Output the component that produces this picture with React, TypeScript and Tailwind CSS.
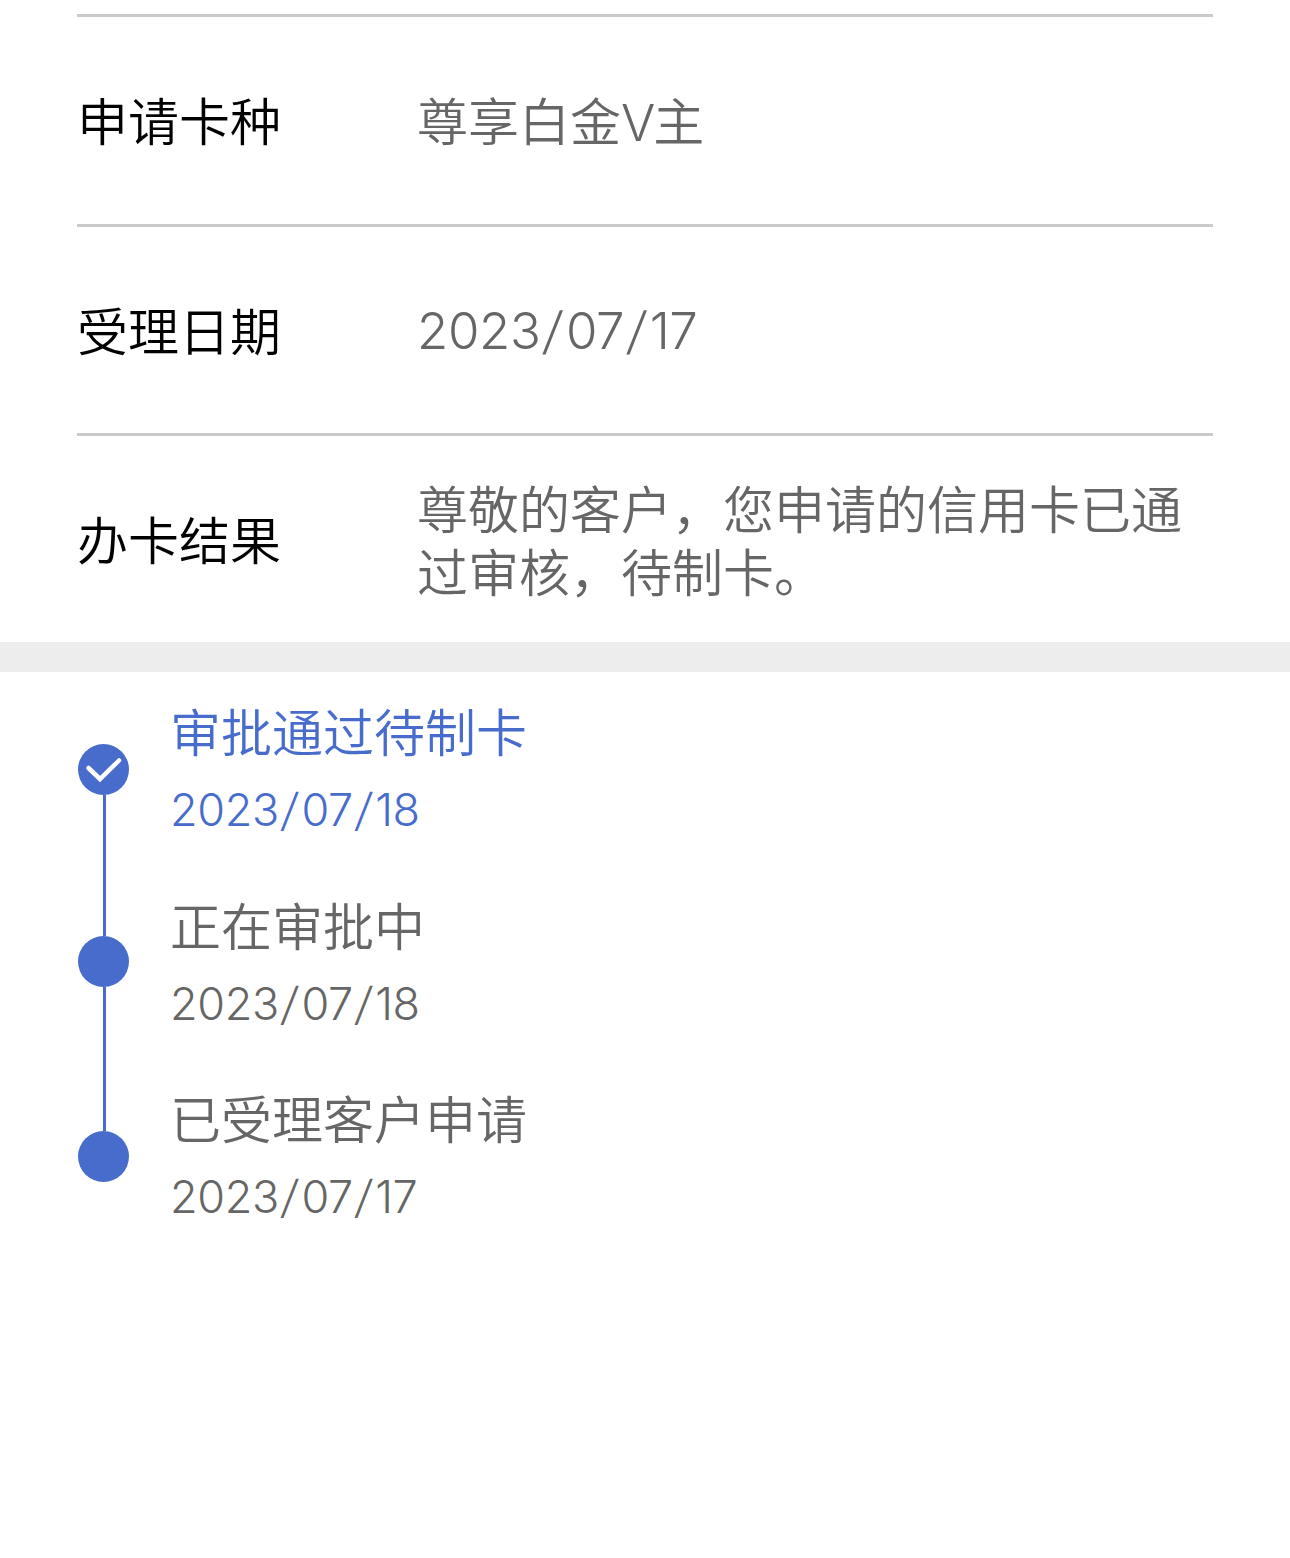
import React, { FC, ReactNode } from 'react';
import clsx from 'clsx';

interface Detail {
  label: string;
  value: ReactNode;
}

interface Step {
  title: string;
  date: string;
}

const DateText: FC<{ value: string }> = ({ value }) => (
  <span className="font-[360] tracking-[-0.008em]">
    {value.split('/').map((part, index) => (
      <React.Fragment key={index}>
        {index > 0 && (
          <span className="mx-[0.08em] inline-block -skew-x-[7deg]">/</span>
        )}
        {part}
      </React.Fragment>
    ))}
  </span>
);

const DETAILS: Detail[] = [
  {
    label: '申请卡种',
    value: (
      <p className="pt-[5px]">
        尊享白金<span className="-mr-[2px]">V</span>主
      </p>
    ),
  },
  {
    label: '受理日期',
    value: (
      <p className="pt-[2px]">
        <DateText value="2023/07/17" />
      </p>
    ),
  },
  {
    label: '办卡结果',
    value: (
      <p className="pt-[6px]">
        尊敬的客户，您申请的信用卡已通过审核，待制卡。
      </p>
    ),
  },
];

const STEPS: Step[] = [
  { title: '审批通过待制卡', date: '2023/07/18' },
  { title: '正在审批中', date: '2023/07/18' },
  { title: '已受理客户申请', date: '2023/07/17' },
];

const DetailRow: FC<Detail> = ({ label, value }) => (
  <div className="flex h-[209.5px] items-center border-t-3 border-[#cacaca]">
    <dt className="w-[340px] shrink-0 pt-[5px] text-black">{label}</dt>
    <dd className="w-[780px] text-[#666]">{value}</dd>
  </div>
);

const Dot: FC<{ checked?: boolean }> = ({ checked }) => (
  <div className="flex size-[51px] shrink-0 items-center justify-center rounded-full bg-[#486ccc]">
    {checked && (
      <svg
        className="size-[51px]"
        viewBox="0 0 51 51"
        fill="none"
        stroke="white"
        strokeWidth="4.5"
        strokeLinecap="round"
        strokeLinejoin="miter"
      >
        <path d="M10.5 24 L22 35 L41 16.5" />
      </svg>
    )}
  </div>
);

const Timeline: FC = () => (
  <section className="flex px-[78px]">
    <div className="flex flex-col items-center pt-[72px]">
      <Dot checked />
      <div className="ml-px h-[141px] w-[3px] bg-[#486ccc]" />
      <Dot />
      <div className="ml-px h-[144px] w-[3px] bg-[#486ccc]" />
      <Dot />
    </div>

    <ol className="ml-[41px] pt-[26px]">
      {STEPS.map((step, index) => (
        <li
          key={step.title}
          className={clsx(
            'h-[193.5px]',
            index === 0 ? 'text-[#486ccc]' : 'text-[#666]'
          )}
        >
          <p className="leading-[72px]">{step.title}</p>
          <p className="text-[45px] leading-[80px]">
            <DateText value={step.date} />
          </p>
        </li>
      ))}
    </ol>
  </section>
);

const App: FC = () => {
  return (
    <main className="min-h-[1558px] w-[1290px] bg-white pt-[14px] font-['Inter','Noto_Sans_CJK_SC',sans-serif] text-[51px] leading-[63px] font-[350]">
      <dl className="h-[628px] px-[77px]">
        {DETAILS.map((detail) => (
          <DetailRow key={detail.label} {...detail} />
        ))}
      </dl>
      <div className="h-[30px] bg-[#ededed]" />
      <Timeline />
    </main>
  );
};

export default App;
